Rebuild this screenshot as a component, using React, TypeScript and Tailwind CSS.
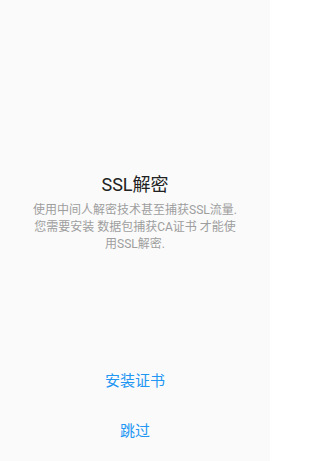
export default function App() {
  return (
    <div
      className="flex h-[461px] w-[270px] flex-col items-center bg-[#fafafa]"
      style={{ fontFamily: 'Roboto, "Noto Sans CJK SC", sans-serif' }}
    >
      <div className="flex flex-1 flex-col items-center pt-[172px]">
        <h1 className="text-[18px] leading-[26px] text-[#212121]">SSL解密</h1>
        <p className="mt-[4px] w-[212px] text-center text-[12px] leading-[17px] text-[#9e9e9e]">
          使用中间人解密技术甚至捕获SSL流量.
          <br />
          您需要安装 数据包捕获CA证书 才能使
          <br />
          用SSL解密.
        </p>
      </div>
      <div className="flex flex-col items-center gap-[30px] pb-[20px]">
        <button className="text-[15px] leading-[20px] text-[#2196f3]">安装证书</button>
        <button className="text-[15px] leading-[20px] text-[#2196f3]">跳过</button>
      </div>
    </div>
  )
}
